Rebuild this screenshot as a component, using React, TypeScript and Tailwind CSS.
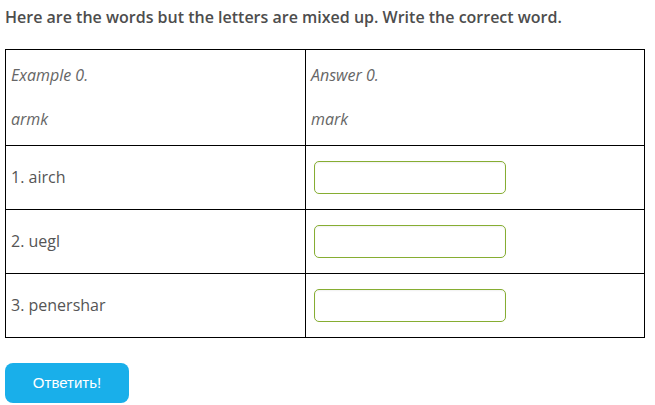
import { useState } from 'react'

const WORDS = [
  { n: 1, word: 'airch' },
  { n: 2, word: 'uegl' },
  { n: 3, word: 'penershar' },
]

export default function App() {
  const [answers, setAnswers] = useState<Record<number, string>>({})

  return (
    <div className="bg-white px-[5px] pt-[5px] text-[#555] font-['Open_Sans',sans-serif]">
      <h1 className="text-[16px] font-semibold leading-[24px] text-[#4d4d4d]">
        Here are the words but the letters are mixed up. Write the correct word.
      </h1>

      <table className="mt-[20px] w-[640px] border-collapse border border-black text-[16px]">
        <tbody>
          <tr className="h-[96px]">
            <td className="w-[300px] border border-black px-[5px] pb-[2px] align-middle italic text-[#666]">
              <p className="leading-[24px]">Example 0.</p>
              <p className="mt-[20px] leading-[24px]">armk</p>
            </td>
            <td className="border border-black px-[5px] pb-[2px] align-middle italic text-[#666]">
              <p className="leading-[24px]">Answer 0.</p>
              <p className="mt-[20px] leading-[24px]">mark</p>
            </td>
          </tr>
          {WORDS.map(w => (
            <tr key={w.n} className="h-[64px]">
              <td className="border border-black px-[5px] pb-[2px] align-middle">
                {w.n}. {w.word}
              </td>
              <td className="border border-black pl-[8px] pb-[1px] align-middle">
                <input
                  type="text"
                  value={answers[w.n] ?? ''}
                  onChange={e => setAnswers({ ...answers, [w.n]: e.target.value })}
                  className="block h-[33px] w-[192px] rounded-[5px] border border-[#86ad32] bg-white px-2 shadow-[inset_0_1px_2px_rgba(0,0,0,0.06)] outline-none"
                />
              </td>
            </tr>
          ))}
        </tbody>
      </table>

      <button className="mt-[25px] h-[40px] w-[124px] rounded-[8px] bg-[#19afea] text-[15px] text-white font-['Liberation_Sans',sans-serif]">
        Ответить!
      </button>
    </div>
  )
}
